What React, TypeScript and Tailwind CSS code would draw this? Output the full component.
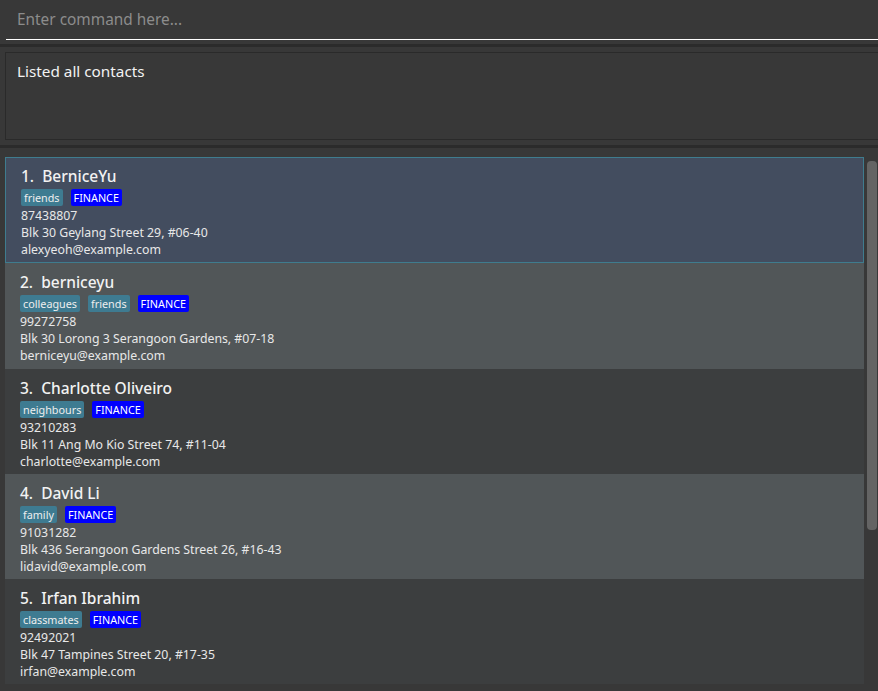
import React from "react";

type Person = {
  name: string;
  tags: string[];
  phone: string;
  address: string;
  email: string;
};

const people: Person[] = [
  { name: "BerniceYu", tags: ["friends"], phone: "87438807", address: "Blk 30 Geylang Street 29, #06-40", email: "alexyeoh@example.com" },
  { name: "berniceyu", tags: ["colleagues", "friends"], phone: "99272758", address: "Blk 30 Lorong 3 Serangoon Gardens, #07-18", email: "berniceyu@example.com" },
  { name: "Charlotte Oliveiro", tags: ["neighbours"], phone: "93210283", address: "Blk 11 Ang Mo Kio Street 74, #11-04", email: "charlotte@example.com" },
  { name: "David Li", tags: ["family"], phone: "91031282", address: "Blk 436 Serangoon Gardens Street 26, #16-43", email: "lidavid@example.com" },
  { name: "Irfan Ibrahim", tags: ["classmates"], phone: "92492021", address: "Blk 47 Tampines Street 20, #17-35", email: "irfan@example.com" },
];

const font = { fontFamily: '"Noto Sans", "Open Sans", sans-serif' };

function Card({ p, i }: { p: Person; i: number }) {
  const selected = i === 0;
  const bg = selected
    ? "bg-[#434d5f] border border-[#3f7c8e]"
    : i % 2 === 1
    ? "bg-[#515658] border border-transparent border-l-0 border-r-0"
    : "bg-[#3c3e3f] border border-transparent border-l-0 border-r-0";
  const h = i < 2 ? "h-[106px]" : "h-[105px]";
  return (
    <div className={`${bg} ${h} pl-[15px] pt-[8px] flex flex-col`}>
      <div className="h-[20px] leading-[20px] text-[15.5px] font-medium text-[#f2f2f2] whitespace-pre">
        {`${i + 1}.  ${p.name}`}
      </div>
      <div className="flex gap-[8px] mt-[3px] h-[17px]">
        {p.tags.map((t) => (
          <span key={t} className="bg-[#3e7b91] text-[#eeeeee] text-[10.8px] leading-[17px] px-[3px] rounded-[2px]">
            {t}
          </span>
        ))}
        <span className="bg-[#0000ff] text-white text-[10.8px] leading-[17px] px-[3px] rounded-[2px]">FINANCE</span>
      </div>
      <div className="text-[12.3px] leading-[17px] text-[#e8e8e8] mt-[1px]">{p.phone}</div>
      <div className="text-[12.3px] leading-[17px] text-[#e8e8e8]">{p.address}</div>
      <div className="text-[12.3px] leading-[17px] text-[#e8e8e8]">{p.email}</div>
    </div>
  );
}

export default function App() {
  return (
    <div className="w-[878px] h-[691px] bg-[#383838] overflow-hidden flex flex-col" style={font}>
      <div className="h-[44px] pl-[6px] pt-[0px] flex flex-col">
        <div className="h-[40px] border-b border-white flex items-center pl-[11px] pt-[1px] text-[15.4px] text-[#8c8c8c]">
          Enter command here...
        </div>
      </div>
      <div className="h-[3px] bg-[#2b2b2b]" />
      <div className="pl-[5px] pt-[5px]">
        <div className="h-[88px] border border-r-0 border-[#2a2a2a] pl-[11px] pt-[8px] text-[15.3px] text-[#f2f2f2] leading-[20px]">
          Listed all contacts
        </div>
      </div>
      <div className="h-[5px]" />
      <div className="h-[3px] bg-[#2b2b2b]" />
      <div className="flex-1 flex pt-[9px] pl-[5px]">
        <div className="w-[859px] flex flex-col">
          {people.map((p, i) => (
            <Card key={i} p={p} i={i} />
          ))}
        </div>
        <div className="w-[14px] pl-[3px] pt-[4px]">
          <div className="w-[10px] h-[369px] rounded-[4px] bg-[#646464]" />
        </div>
      </div>
    </div>
  );
}
